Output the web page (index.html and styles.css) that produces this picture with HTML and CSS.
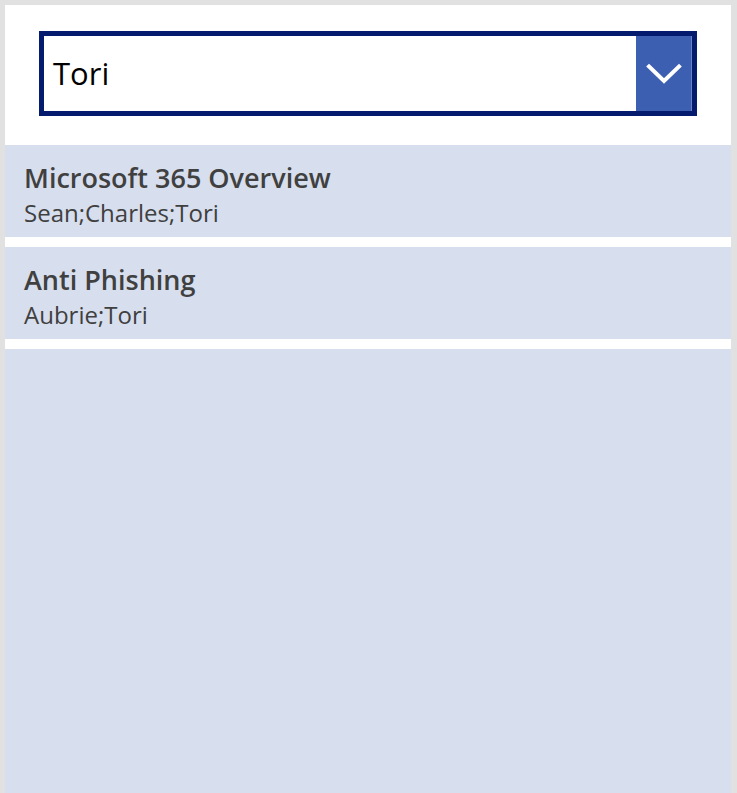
FILE: index.html
```html
<!DOCTYPE html>
<html lang="en">
<head>
<meta charset="utf-8">
<title>Courses</title>
<link rel="stylesheet" href="styles.css">
</head>
<body>
<div class="card">
  <div class="header">
    <div class="combo">
      <div class="combo-text">Tori</div>
      <div class="combo-btn">
        <svg width="36" height="22" viewBox="0 0 36 22" aria-hidden="true">
          <path d="M3 3.5 L18 18 L33 3.5" fill="none" stroke="#ffffff" stroke-width="4" stroke-linecap="square"/>
        </svg>
      </div>
    </div>
  </div>
  <div class="list">
    <div class="row">
      <div class="title">Microsoft 365 Overview</div>
      <div class="sub">Sean;Charles;Tori</div>
    </div>
    <div class="row">
      <div class="title">Anti Phishing</div>
      <div class="sub">Aubrie;Tori</div>
    </div>
    <div class="rest"></div>
  </div>
</div>
</body>
</html>
```
FILE: styles.css
```css
html, body {
  margin: 0;
  padding: 0;
  height: 100%;
}
body {
  background: #e1e1e1;
  font-family: "Open Sans", "Noto Sans", sans-serif;
  padding: 5px 6px 0 5px;
  box-sizing: border-box;
  overflow: hidden;
}
.card {
  background: #ffffff;
  width: 726px;
  height: 788px;
  display: flex;
  flex-direction: column;
}
.header {
  height: 140px;
  box-sizing: border-box;
  padding: 26px 34px 0 34px;
}
.combo {
  height: 85px;
  box-sizing: border-box;
  border: 5px solid #041b6e;
  background: #ffffff;
  display: flex;
  align-items: stretch;
}
.combo-text {
  flex: 1;
  font-size: 31px;
  color: #000000;
  padding-left: 9px;
  line-height: 75px;
}
.combo-btn {
  width: 55px;
  background: #3c5fb1;
  display: flex;
  align-items: center;
  justify-content: center;
  border-right: 1px solid #6b83c4;
}
.list {
  flex: 1;
  display: flex;
  flex-direction: column;
  gap: 10px;
}
.row {
  height: 92px;
  background: #d7deed;
  box-sizing: border-box;
  padding: 16px 19px 0 19px;
  color: #404040;
}
.title {
  font-size: 27px;
  font-weight: 600;
  line-height: 34px;
}
.sub {
  font-size: 24px;
  line-height: 36px;
}
.rest {
  flex: 1;
  background: #d7deed;
}
```
